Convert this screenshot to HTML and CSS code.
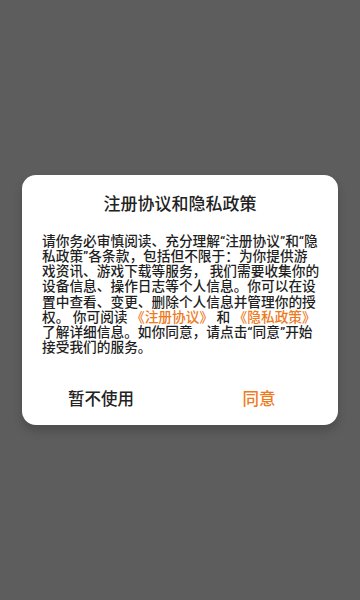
FILE: index.html
```html
<!DOCTYPE html>
<html lang="zh-CN">
<head>
<meta charset="utf-8">
<meta name="viewport" content="width=360, initial-scale=1">
<title>注册协议和隐私政策</title>
<link rel="stylesheet" href="styles.css">
</head>
<body>
<div class="overlay">
  <div class="dialog">
    <h1 class="title">注册协议和隐私政策</h1>
    <p class="content">请你务必审慎阅读、充分理解“注册协议”和“隐私政策”各条款，包括但不限于：为你提供游戏资讯、游戏下载等服务， 我们需要收集你的设备信息、操作日志等个人信息。你可以在设置中查看、变更、删除个人信息并管理你的授权。 你可阅读 <span class="link">《注册协议》</span> 和 <span class="link">《隐私政策》</span>了解详细信息。如你同意，请点击“同意”开始接受我们的服务。</p>
    <div class="actions">
      <button class="btn btn-cancel" type="button">暂不使用</button>
      <button class="btn btn-ok" type="button">同意</button>
    </div>
  </div>
</div>
</body>
</html>
```

FILE: styles.css
```css
html, body {
  margin: 0;
  padding: 0;
  height: 100%;
}
body {
  background: #5d5d5d;
  font-family: Roboto, "Noto Sans CJK SC", sans-serif;
}
.overlay {
  height: 600px;
  display: flex;
  align-items: center;
  justify-content: center;
  padding: 0 22px;
  box-sizing: border-box;
}
.dialog {
  width: 100%;
  background: #ffffff;
  border-radius: 14px;
  box-shadow: 0 6px 10px rgba(0, 0, 0, 0.18);
  padding-top: 17px;
  box-sizing: border-box;
}
.title {
  margin: 0;
  font-size: 17px;
  line-height: 24px;
  font-weight: 500;
  color: #222222;
  text-align: center;
}
.content {
  margin: 18px 18.3px 0 20px;
  font-size: 13.7px;
  line-height: 15.2px;
  font-weight: 500;
  color: #1f1f1f;
  text-align: left;
}
.link {
  color: #ee7a1c;
}
.actions {
  display: flex;
  margin-top: 16px;
  height: 54px;
}
.btn {
  flex: 1;
  border: none;
  background: transparent;
  font-family: Roboto, "Noto Sans CJK SC", sans-serif;
  font-size: 16.5px;
  font-weight: 500;
  padding: 0;
  cursor: pointer;
}
.btn-cancel {
  color: #222222;
}
.btn-ok {
  color: #ee7a1c;
}
```
